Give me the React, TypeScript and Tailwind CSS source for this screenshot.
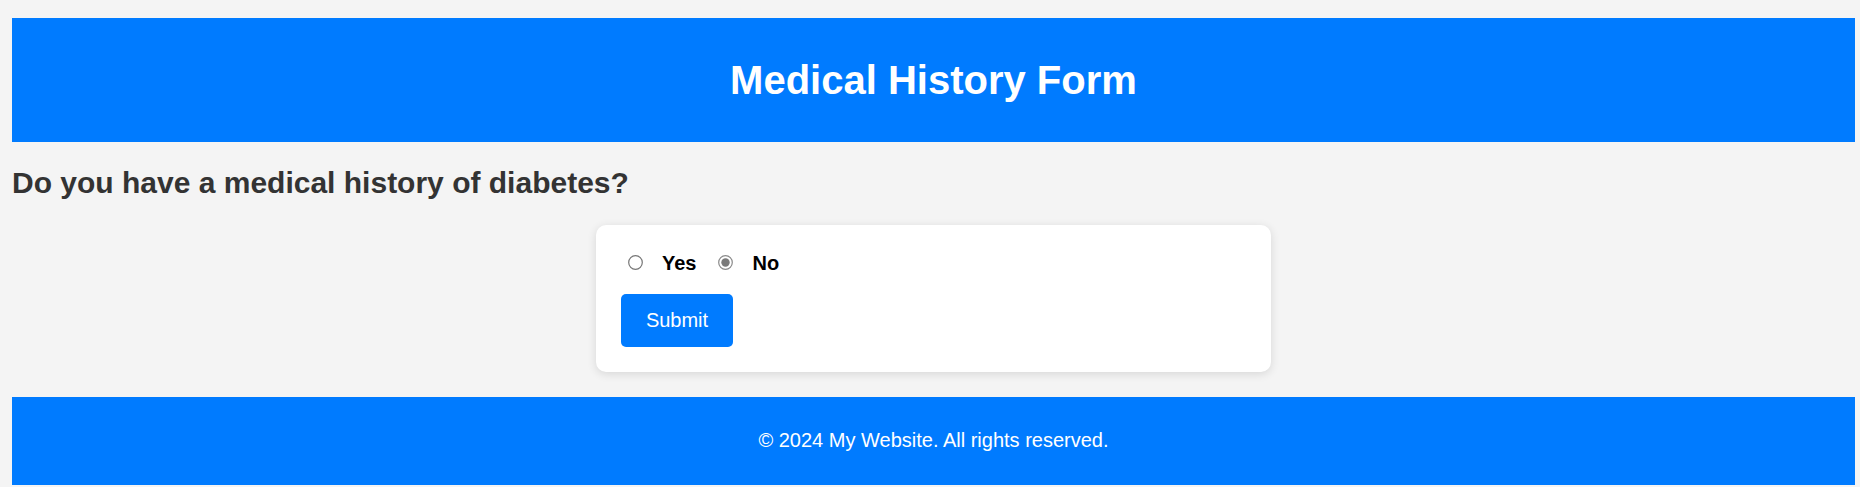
import React, { useState } from "react";

function Radio({ checked }: { checked: boolean }) {
  return (
    <svg width="15" height="15" viewBox="0 0 15 15" className="shrink-0">
      <circle cx="7.5" cy="7.5" r="6.8" fill="#ffffff" stroke={checked ? "#8a8a8a" : "#767676"} strokeWidth="1.2" />
      {checked && <circle cx="7.5" cy="7.5" r="4.2" fill="#7a7a7a" />}
    </svg>
  );
}

export default function App() {
  const [value, setValue] = useState<"yes" | "no">("no");
  return (
    <div className="min-h-screen bg-[#f4f4f4] pt-[18px] pl-[12px] pr-[5px] font-['Liberation_Sans',Arial,sans-serif]">
      <header className="h-[124px] bg-[#007bff] flex items-center justify-center">
        <h1 className="text-[40px] leading-[46px] font-bold text-white">Medical History Form</h1>
      </header>
      <h2 className="mt-[23px] mb-[25px] text-[30px] leading-[35px] font-bold text-[#333333]">
        Do you have a medical history of diabetes?
      </h2>
      <div className="mx-auto w-[675px] bg-white rounded-[10px] p-[25px] shadow-[0_2px_10px_rgba(0,0,0,0.12)]">
        <div className="flex items-center h-[26px] mb-[18px] text-[20px] leading-[23px] font-bold text-black">
          <label className="flex items-center cursor-pointer" onClick={() => setValue("yes")}>
            <span className="ml-[7px] mr-[19px] flex -mt-[2px]">
              <Radio checked={value === "yes"} />
            </span>
            <span>Yes</span>
          </label>
          <label className="flex items-center cursor-pointer ml-[22px]" onClick={() => setValue("no")}>
            <span className="mr-[19px] flex -mt-[2px]">
              <Radio checked={value === "no"} />
            </span>
            <span>No</span>
          </label>
        </div>
        <button className="w-[112px] h-[53px] bg-[#007bff] text-white text-[20px] leading-[23px] rounded-[5px] flex items-center justify-center">
          Submit
        </button>
      </div>
      <footer className="mt-[25px] h-[88px] pt-[32px] bg-[#007bff] text-white text-center text-[20px] leading-[23px]">
        © 2024 My Website. All rights reserved.
      </footer>
    </div>
  );
}
